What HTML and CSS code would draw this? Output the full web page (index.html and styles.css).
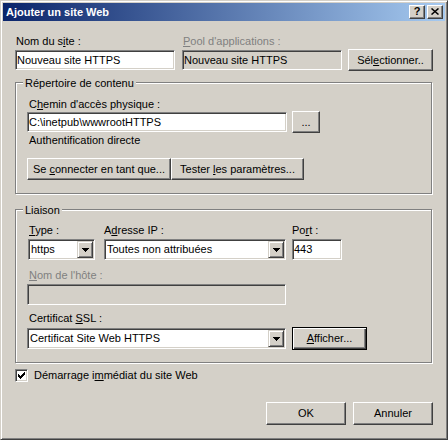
FILE: index.html
```html
<!DOCTYPE html>
<html lang="fr">
<head>
<meta charset="utf-8">
<title>Ajouter un site Web</title>
<link rel="stylesheet" href="styles.css">
</head>
<body>
<div class="window">
  <div class="titlebar">
    <span class="title">Ajouter un site Web</span>
    <div class="caption-buttons">
      <div class="cbtn help">?</div>
      <div class="cbtn">
        <svg width="8" height="7" viewBox="0 0 8 7"><path d="M0.5 0.5 L7.5 6.5 M7.5 0.5 L0.5 6.5" stroke="#000" stroke-width="1.5" fill="none"/></svg>
      </div>
    </div>
  </div>

  <div class="content">
    <div class="top-labels">
      <div class="label w-name">Nom du s<u>i</u>te :</div>
      <div class="label disabled w-pool"><u>P</u>ool d'applications :</div>
    </div>
    <div class="top-fields">
      <div class="edit h20 w-site">Nouveau site HTTPS</div>
      <div class="edit h20 readonly w-poolfield">Nouveau site HTTPS</div>
      <div class="btn w-select"><span>Sél<u>e</u>ctionner..</span></div>
    </div>

    <div class="group g1">
      <span class="legend">Répertoire de contenu</span>
      <div class="label glabel m8">C<u>h</u>emin d'accès physique :</div>
      <div class="path-row">
        <div class="edit h20 w-path">C:\inetpub\wwwrootHTTPS</div>
        <div class="btn w-browse"><span>...</span></div>
      </div>
      <div class="label glabel m1">Authentification directe</div>
      <div class="btn-pair">
        <div class="btn w-connect"><span>Se <u>c</u>onnecter en tant que...</span></div>
        <div class="btn w-test"><span>Tester <u>l</u>es paramètres...</span></div>
      </div>
    </div>

    <div class="group g2">
      <span class="legend">Liaison</span>
      <div class="bind-row">
        <div class="bind-col col-type">
          <div class="label"><u>T</u>ype :</div>
          <div class="combo">
            <span class="val">https</span>
            <span class="drop"><svg width="7" height="4" viewBox="0 0 7 4" shape-rendering="crispEdges"><rect x="0" y="0" width="7" height="1"/><rect x="1" y="1" width="5" height="1"/><rect x="2" y="2" width="3" height="1"/><rect x="3" y="3" width="1" height="1"/></svg></span>
          </div>
        </div>
        <div class="bind-col col-ip">
          <div class="label nolead">A<u>d</u>resse IP :</div>
          <div class="combo">
            <span class="val">Toutes non attribuées</span>
            <span class="drop"><svg width="7" height="4" viewBox="0 0 7 4" shape-rendering="crispEdges"><rect x="0" y="0" width="7" height="1"/><rect x="1" y="1" width="5" height="1"/><rect x="2" y="2" width="3" height="1"/><rect x="3" y="3" width="1" height="1"/></svg></span>
          </div>
        </div>
        <div class="bind-col col-port">
          <div class="label nolead">Po<u>r</u>t :</div>
          <div class="edit h21">443</div>
        </div>
      </div>
      <div class="label glabel disabled m9"><u>N</u>om de l'hôte :</div>
      <div class="edit h21 readonly w-host"></div>
      <div class="label glabel m7">Certificat <u>S</u>SL :</div>
      <div class="ssl-row">
        <div class="combo w-ssl">
          <span class="val">Certificat Site Web HTTPS</span>
          <span class="drop"><svg width="7" height="4" viewBox="0 0 7 4" shape-rendering="crispEdges"><rect x="0" y="0" width="7" height="1"/><rect x="1" y="1" width="5" height="1"/><rect x="2" y="2" width="3" height="1"/><rect x="3" y="3" width="1" height="1"/></svg></span>
        </div>
        <div class="btn default w-show"><span><u>A</u>fficher...</span></div>
      </div>
    </div>

    <div class="check-row">
      <div class="check">
        <svg width="7" height="7" viewBox="0 0 7 7" shape-rendering="crispEdges"><rect x="6" y="0" width="1" height="1"/><rect x="5" y="1" width="2" height="1"/><rect x="0" y="2" width="1" height="1"/><rect x="4" y="2" width="3" height="1"/><rect x="0" y="3" width="2" height="1"/><rect x="3" y="3" width="3" height="1"/><rect x="0" y="4" width="5" height="1"/><rect x="1" y="5" width="3" height="1"/><rect x="2" y="6" width="1" height="1"/></svg>
      </div>
      <span class="check-label">Démarrage i<u>m</u>médiat du site Web</span>
    </div>

    <div class="dialog-buttons">
      <div class="btn w-ok"><span>OK</span></div>
      <div class="btn w-ok"><span>Annuler</span></div>
    </div>
  </div>
</div>
</body>
</html>
```

FILE: styles.css
```css
* { box-sizing: border-box; }
html, body { margin: 0; padding: 0; }
body {
  width: 448px;
  height: 440px;
  overflow: hidden;
  background: #d4d0c8;
  font-family: "Liberation Sans", Arial, sans-serif;
  font-size: 11px;
  line-height: 13px;
  color: #000;
}
u { text-underline-offset: 1px; }

.window {
  width: 448px;
  height: 440px;
  background: #d4d0c8;
  border: 1px solid;
  border-color: #d4d0c8 #404040 #404040 #d4d0c8;
  box-shadow: inset 1px 1px #fff, inset -1px -1px #808080;
  padding: 2px;
  display: flex;
  flex-direction: column;
}

.titlebar {
  height: 18px;
  flex: none;
  background: linear-gradient(to right, #0a246a, #a6caf0);
  display: flex;
  align-items: center;
  justify-content: space-between;
  padding: 0 2px 0 3px;
}
.title { color: #fff; font-weight: bold; }
.caption-buttons { display: flex; gap: 2px; }
.cbtn {
  width: 16px;
  height: 14px;
  background: #d4d0c8;
  border: 1px solid;
  border-color: #fff #404040 #404040 #fff;
  box-shadow: inset -1px -1px #808080;
  display: flex;
  align-items: center;
  justify-content: center;
  padding-bottom: 1px;
}
.cbtn.help { font-weight: bold; font-size: 11px; line-height: 11px; }

.content {
  flex: 1;
  padding: 14px 12px 0 12px;
  display: flex;
  flex-direction: column;
}

.label { height: 13px; padding-left: 1px; white-space: nowrap; }
.label.nolead { padding-left: 0; }
.glabel { padding-left: 2px; }
.disabled { color: #808080; }
.m1 { margin-top: 1px; }
.m7 { margin-top: 7px; }
.m8 { margin-top: 8px; }
.m9 { margin-top: 9px; }

.top-labels { display: flex; }
.w-name { width: 167px; }
.top-fields { display: flex; align-items: center; height: 22px; margin-top: 1px; }
.w-site { width: 160px; margin-right: 7px; }
.w-poolfield { width: 160px; margin-right: 6px; }
.w-select { width: 85px; }

/* sunken edit */
.edit {
  background: #fff;
  border: 1px solid;
  border-color: #808080 #fff #fff #808080;
  box-shadow: inset 1px 1px #404040, inset -1px -1px #d4d0c8;
  padding-left: 1px;
  white-space: nowrap;
  overflow: hidden;
}
.edit.h20 { height: 20px; line-height: 18px; }
.edit.h21 { height: 21px; line-height: 19px; }
.edit.readonly { background: #d4d0c8; }

/* raised button */
.btn {
  height: 22px;
  background: #d4d0c8;
  border: 1px solid;
  border-color: #fff #404040 #404040 #fff;
  box-shadow: inset -1px -1px #808080;
  display: flex;
  align-items: center;
  justify-content: center;
  white-space: nowrap;
}
.btn.default {
  height: 23px;
  border-color: #000;
  box-shadow: inset 1px 1px #fff, inset -1px -1px #404040, inset -2px -2px #808080;
}

/* group boxes */
.group {
  width: 417px;
  border: 1px solid #808080;
  box-shadow: inset 1px 1px #fff, 1px 1px 0 #fff;
  padding: 0 11px;
  display: flex;
  flex-direction: column;
  align-items: flex-start;
}
.g1 { margin-top: 11px; padding-bottom: 13px; }
.g2 { margin-top: 15px; padding-bottom: 12px; }
.legend {
  margin: -6px 0 0 -4px;
  padding: 0 2px;
  background: #d4d0c8;
  height: 13px;
}

.path-row { display: flex; align-items: center; height: 22px; }
.w-path { width: 260px; margin-right: 5px; }
.w-browse { width: 28px; }

.btn-pair { display: flex; margin-top: 11px; }
.w-connect { width: 144px; }
.w-test { width: 133px; }

.bind-row { display: flex; margin-top: 7px; }
.bind-col { display: flex; flex-direction: column; gap: 2px; }
.col-type { width: 67px; margin-left: 1px; margin-right: 9px; }
.col-ip { width: 182px; margin-right: 6px; }
.col-port { width: 50px; }

.combo {
  height: 21px;
  background: #fff;
  border: 1px solid;
  border-color: #808080 #fff #fff #808080;
  box-shadow: inset 1px 1px #404040, inset -1px -1px #d4d0c8;
  padding: 1px;
  display: flex;
}
.combo .val { flex: 1; line-height: 17px; padding-left: 1px; white-space: nowrap; overflow: hidden; }
.combo .drop {
  width: 16px;
  height: 17px;
  flex: none;
  background: #d4d0c8;
  border: 1px solid;
  border-color: #d4d0c8 #404040 #404040 #d4d0c8;
  box-shadow: inset 1px 1px #fff, inset -1px -1px #808080;
  display: flex;
  align-items: center;
  justify-content: center;
}
.combo .drop svg { fill: #000; }

.w-host { width: 259px; margin-top: 2px; }
.ssl-row { display: flex; align-items: center; height: 23px; margin-top: 2px; }
.w-ssl { width: 259px; margin-right: 6px; }
.w-show { width: 75px; }

.check-row { display: flex; align-items: center; margin-top: 6px; height: 13px; }
.check {
  width: 13px;
  height: 13px;
  background: #fff;
  border: 1px solid;
  border-color: #808080 #fff #fff #808080;
  box-shadow: inset 1px 1px #404040, inset -1px -1px #d4d0c8;
  display: flex;
  align-items: center;
  justify-content: center;
}
.check svg { fill: #000; }
.check-label { margin-left: 6px; white-space: nowrap; }

.dialog-buttons { display: flex; justify-content: flex-end; gap: 7px; margin-top: 20px; }
.w-ok { width: 80px; height: 23px; }
```
